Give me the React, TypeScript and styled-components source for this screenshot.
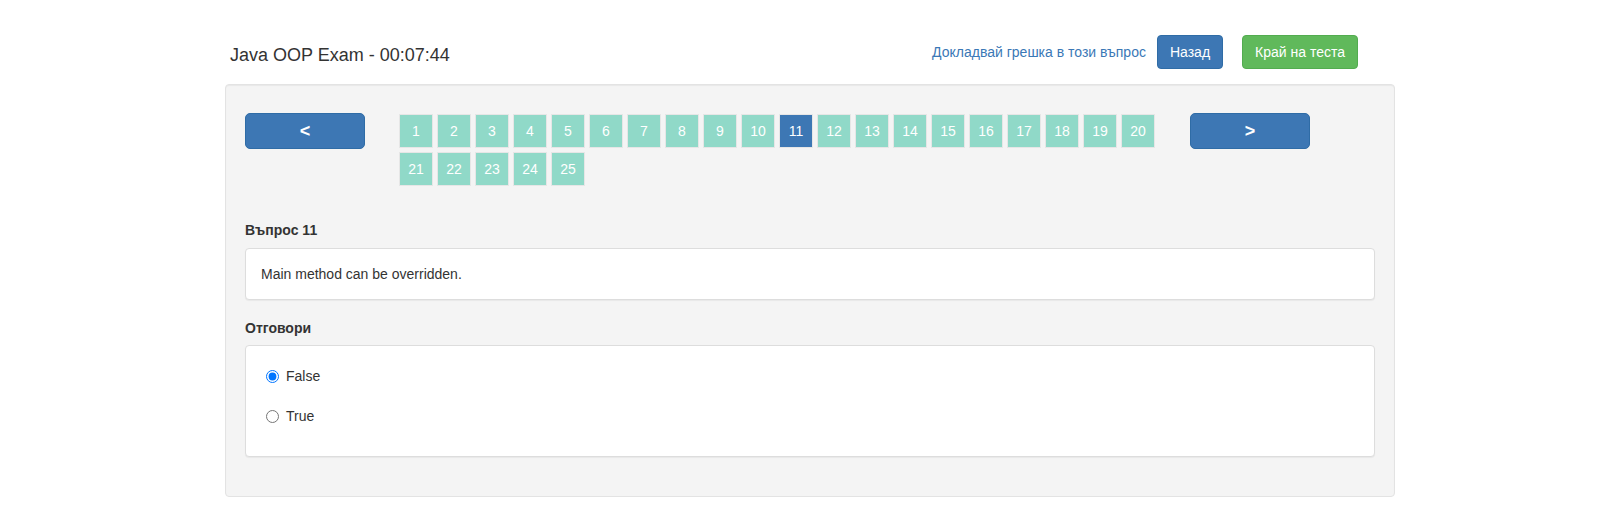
import React from "react";
import styled, { createGlobalStyle } from "styled-components";

const GlobalStyle = createGlobalStyle`
  html, body {
    margin: 0;
    padding: 0;
    background: #ffffff;
  }
  body {
    font-family: "Liberation Sans", Arial, Helvetica, sans-serif;
    font-size: 14px;
    line-height: 20px;
    color: #333333;
  }
  * { box-sizing: border-box; }
`;

const Page = styled.div`
  padding: 35px 0 0 225px;
`;

const Container = styled.div`
  width: 1170px;
`;

const Header = styled.header`
  display: flex;
  justify-content: space-between;
  align-items: flex-start;
  height: 34px;
  padding: 0 37px 0 5px;
`;

const Title = styled.h4`
  margin: 10px 0 0 0;
  font-size: 18px;
  line-height: 20px;
  font-weight: normal;
  color: #333333;
`;

const Actions = styled.div`
  display: flex;
  align-items: center;
  height: 34px;
`;

const ReportLink = styled.a`
  color: #3a78b6;
  text-decoration: none;
  font-size: 14px;
  line-height: 20px;
  margin-right: 11px;
  cursor: pointer;
`;

const Btn = styled.button<{ $variant: "primary" | "success"; $gap?: number }>`
  height: 34px;
  padding: 6px 12px;
  margin-left: ${(p) => p.$gap ?? 0}px;
  font-family: inherit;
  font-size: 14px;
  line-height: 20px;
  color: #ffffff;
  border-radius: 4px;
  border: 1px solid ${(p) => (p.$variant === "primary" ? "#2f6ca6" : "#52ac4f")};
  background: ${(p) => (p.$variant === "primary" ? "#3d77b4" : "#60b95b")};
  cursor: pointer;
`;

const Well = styled.section`
  margin-top: 15px;
  padding: 19px;
  background: #f4f4f4;
  border: 1px solid #e3e3e3;
  border-radius: 4px;
  box-shadow: inset 0 1px 1px rgba(0, 0, 0, 0.05);
`;

const NavRow = styled.div`
  display: flex;
  align-items: flex-start;
  margin-top: 8px;
`;

const NavButton = styled.button`
  width: 120px;
  height: 36px;
  margin-top: 1px;
  padding: 0;
  display: flex;
  align-items: center;
  justify-content: center;
  font-family: inherit;
  font-size: 18px;
  font-weight: bold;
  color: #ffffff;
  background: #3d77b4;
  border: 1px solid #2f6ca6;
  border-radius: 5px;
  cursor: pointer;
`;

const Tiles = styled.div`
  width: 760px;
  display: flex;
  flex-wrap: wrap;
  margin: 0 33px 0 32px;
`;

const Tile = styled.div<{ $active?: boolean }>`
  width: 34px;
  height: 34px;
  margin: 2px;
  display: flex;
  align-items: center;
  justify-content: center;
  border: 1px solid #e6e6e6;
  background: ${(p) => (p.$active ? "#3d77b4" : "#90d9c8")};
  color: #ffffff;
  font-size: 14px;
  cursor: pointer;
`;

const FieldLabel = styled.div<{ $top: number; $bottom: number }>`
  font-weight: bold;
  font-size: 14px;
  line-height: 20px;
  color: #333333;
  margin-top: ${(p) => p.$top}px;
  margin-bottom: ${(p) => p.$bottom}px;
`;

const Panel = styled.div<{ $pad: string; $bottom?: number }>`
  background: #ffffff;
  border: 1px solid #dddddd;
  border-radius: 4px;
  box-shadow: 0 1px 1px rgba(0, 0, 0, 0.05);
  padding: ${(p) => p.$pad};
  margin-bottom: ${(p) => p.$bottom ?? 0}px;
`;

const QuestionText = styled.div`
  font-size: 14px;
  line-height: 20px;
  color: #333333;
`;

const AnswerList = styled.div`
  display: flex;
  flex-direction: column;
  gap: 20px;
`;

const AnswerRow = styled.label`
  display: flex;
  align-items: center;
  height: 20px;
  padding-left: 20px;
  font-size: 14px;
  line-height: 20px;
  color: #333333;
  cursor: pointer;
`;

const Radio = styled.input`
  width: 13px;
  height: 13px;
  margin: 0 7px 0 0;
`;

export default function App() {
  const total = 25;
  const current = 11;
  return (
    <>
      <GlobalStyle />
      <Page>
        <Container>
          <Header>
            <Title>Java OOP Exam - 00:07:44</Title>
            <Actions>
              <ReportLink>Докладвай грешка в този въпрос</ReportLink>
              <Btn $variant="primary">Назад</Btn>
              <Btn $variant="success" $gap={19}>
                Край на теста
              </Btn>
            </Actions>
          </Header>
          <Well>
            <NavRow>
              <NavButton>&lt;</NavButton>
              <Tiles>
                {Array.from({ length: total }, (_, i) => (
                  <Tile key={i} $active={i + 1 === current}>
                    {i + 1}
                  </Tile>
                ))}
              </Tiles>
              <NavButton>&gt;</NavButton>
            </NavRow>
            <FieldLabel $top={32} $bottom={8}>
              Въпрос 11
            </FieldLabel>
            <Panel $pad="15px">
              <QuestionText>Main method can be overridden.</QuestionText>
            </Panel>
            <FieldLabel $top={18} $bottom={7}>
              Отговори
            </FieldLabel>
            <Panel $pad="20px 15px 30px 0" $bottom={20}>
              <AnswerList>
                <AnswerRow>
                  <Radio type="radio" name="answer" defaultChecked />
                  False
                </AnswerRow>
                <AnswerRow>
                  <Radio type="radio" name="answer" />
                  True
                </AnswerRow>
              </AnswerList>
            </Panel>
          </Well>
        </Container>
      </Page>
    </>
  );
}
